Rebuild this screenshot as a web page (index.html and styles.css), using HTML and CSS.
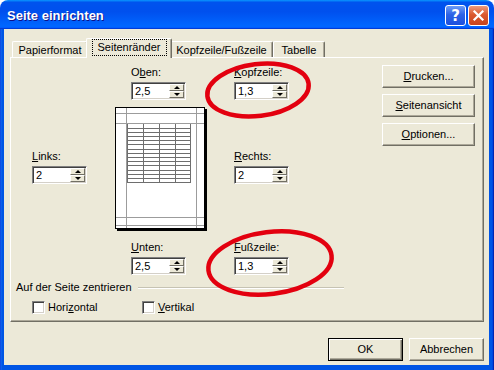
FILE: index.html
```html
<!DOCTYPE html>
<html lang="de">
<head>
<meta charset="utf-8">
<title>Seite einrichten</title>
<link rel="stylesheet" href="styles.css">
</head>
<body>
<div class="window">
  <div class="titlebar">
    <span class="title">Seite einrichten</span>
    <div class="tb-buttons">
      <span class="tb-btn help">?</span>
      <span class="tb-btn close"><svg width="13" height="13" viewBox="0 0 13 13"><path d="M2.5 2.5 L10.5 10.5 M10.5 2.5 L2.5 10.5" stroke="#fff" stroke-width="2.2" stroke-linecap="square"/></svg></span>
    </div>
  </div>
  <div class="frame">
    <div class="client">
      <div class="tabs">
        <div class="tab t1">Papierformat</div>
        <div class="tab t2 active"><span class="focus">Seitenränder</span></div>
        <div class="tab t3">Kopfzeile/Fußzeile</div>
        <div class="tab t4">Tabelle</div>
      </div>
      <div class="panel">
        <div class="main">
          <div class="diagram">
            <div class="field f-oben">
              <span class="lbl">O<u>b</u>en:</span>
              <div class="spin"><span class="val">2,5</span><span class="arrows"><span class="arr up"></span><span class="arr down"></span></span></div>
            </div>
            <div class="field f-kopf">
              <span class="lbl"><u>K</u>opfzeile:</span>
              <div class="spin"><span class="val">1,3</span><span class="arrows"><span class="arr up"></span><span class="arr down"></span></span></div>
            </div>
            <div class="field f-links">
              <span class="lbl"><u>L</u>inks:</span>
              <div class="spin"><span class="val">2</span><span class="arrows"><span class="arr up"></span><span class="arr down"></span></span></div>
            </div>
            <div class="preview">
              <svg width="93" height="125" viewBox="0 0 93 125" shape-rendering="crispEdges">
                <rect x="90" y="2" width="2" height="122" fill="#000"/>
                <rect x="2" y="122" width="90" height="2" fill="#000"/>
                <rect x="0.5" y="0.5" width="89" height="121" fill="#fff" stroke="#000"/>
                <g stroke="#9c9c9c" stroke-width="1">
                  <line x1="11.5" y1="1" x2="11.5" y2="121"/>
                  <line x1="81.5" y1="1" x2="81.5" y2="121"/>
                  <line x1="1" y1="6.5" x2="89" y2="6.5"/>
                  <line x1="1" y1="16.5" x2="89" y2="16.5"/>
                  <line x1="1" y1="110.5" x2="89" y2="110.5"/>
                  <line x1="1" y1="118.5" x2="89" y2="118.5"/>
                </g>
                <g stroke="#6e6e6e" stroke-width="1">
                  <line x1="12.5" y1="17" x2="12.5" y2="76"/>
                  <line x1="28.5" y1="17" x2="28.5" y2="76"/>
                  <line x1="44.5" y1="17" x2="44.5" y2="76"/>
                  <line x1="60.5" y1="17" x2="60.5" y2="76"/>
                  <line x1="75.5" y1="17" x2="75.5" y2="76"/>
                  <line x1="12" y1="21.5" x2="76" y2="21.5"/>
                  <line x1="12" y1="25.5" x2="76" y2="25.5"/>
                  <line x1="12" y1="29.5" x2="76" y2="29.5"/>
                  <line x1="12" y1="33.5" x2="76" y2="33.5"/>
                  <line x1="12" y1="37.5" x2="76" y2="37.5"/>
                  <line x1="12" y1="42.5" x2="76" y2="42.5"/>
                  <line x1="12" y1="46.5" x2="76" y2="46.5"/>
                  <line x1="12" y1="50.5" x2="76" y2="50.5"/>
                  <line x1="12" y1="54.5" x2="76" y2="54.5"/>
                  <line x1="12" y1="58.5" x2="76" y2="58.5"/>
                  <line x1="12" y1="63.5" x2="76" y2="63.5"/>
                  <line x1="12" y1="67.5" x2="76" y2="67.5"/>
                  <line x1="12" y1="71.5" x2="76" y2="71.5"/>
                  <line x1="12" y1="75.5" x2="76" y2="75.5"/>
                </g>
              </svg>
            </div>
            <div class="field f-rechts">
              <span class="lbl"><u>R</u>echts:</span>
              <div class="spin"><span class="val">2</span><span class="arrows"><span class="arr up"></span><span class="arr down"></span></span></div>
            </div>
            <div class="field f-unten">
              <span class="lbl"><u>U</u>nten:</span>
              <div class="spin"><span class="val">2,5</span><span class="arrows"><span class="arr up"></span><span class="arr down"></span></span></div>
            </div>
            <div class="field f-fuss">
              <span class="lbl"><u>F</u>ußzeile:</span>
              <div class="spin"><span class="val">1,3</span><span class="arrows"><span class="arr up"></span><span class="arr down"></span></span></div>
            </div>
          </div>
          <div class="center">
            <div class="sec-title"><span>Auf der Seite zentrieren</span><span class="rule"></span></div>
            <div class="checks">
              <label class="check c-h"><span class="box"></span><span>Hori<u>z</u>ontal</span></label>
              <label class="check"><span class="box"></span><span><u>V</u>ertikal</span></label>
            </div>
          </div>
        </div>
        <div class="side">
          <div class="btn"><u>D</u>rucken...</div>
          <div class="btn"><u>S</u>eitenansicht</div>
          <div class="btn"><u>O</u>ptionen...</div>
        </div>
      </div>
      <div class="footer">
        <div class="btn default">OK</div>
        <div class="btn">Abbrechen</div>
      </div>
    </div>
  </div>
  <svg class="annot" width="494" height="370" viewBox="0 0 494 370">
    <ellipse cx="258" cy="90" rx="51" ry="26" transform="rotate(-7 258 90)" fill="none" stroke="#e3000f" stroke-width="4.5"/>
    <ellipse cx="270" cy="263" rx="62" ry="31" transform="rotate(-7 270 263)" fill="none" stroke="#e3000f" stroke-width="4.5"/>
  </svg>
</div>
</body>
</html>
```

FILE: styles.css
```css
* { box-sizing: border-box; }
html, body { margin: 0; padding: 0; }
body {
  width: 494px;
  height: 370px;
  overflow: hidden;
  background: #fff;
  font-family: "Liberation Sans", Arial, sans-serif;
  font-size: 11px;
  color: #000;
}
u { text-decoration: underline; text-underline-offset: 1px; }

.window {
  position: relative;
  width: 494px;
  height: 370px;
  display: flex;
  flex-direction: column;
}

.titlebar {
  height: 29px;
  flex: none;
  border-radius: 8px 8px 0 0;
  background: linear-gradient(180deg, #0997ff, #0053ee 8%, #0050ee 40%, #06f 88%, #06f 93%, #005bff 95%, #003dd7 96%, #003dd7);
  display: flex;
  align-items: center;
  justify-content: space-between;
  padding: 2px 5px 0 7px;
}
.title {
  color: #fff;
  font-weight: bold;
  font-size: 13px;
  text-shadow: 1px 1px #0f1089;
  letter-spacing: 0;
}
.tb-buttons { display: flex; gap: 2px; }
.tb-btn {
  width: 21px;
  height: 21px;
  border: 1px solid #fff;
  border-radius: 3px;
  display: flex;
  align-items: center;
  justify-content: center;
}
.help {
  background: linear-gradient(180deg, #6c9cf7, #2d63e6 45%, #1c50de);
  color: #fff;
  font-weight: bold;
  font-size: 15px;
  font-family: "DejaVu Sans", sans-serif;
}
.close {
  background: linear-gradient(180deg, #ec9a7d, #db5a30 45%, #c8431d);
}

.frame {
  flex: 1;
  padding: 0 5px 5px 4px;
  background: linear-gradient(90deg, #0831d9 0, #166aee 1px, #0055e5 2px, #0055e5 calc(100% - 2px), #003bda calc(100% - 1px), #00138c 100%);
  display: flex;
}
.client {
  flex: 1;
  background: #ece9d8;
  padding: 9px 5px 0 6px;
  display: flex;
  flex-direction: column;
}

/* tabs */
.tabs {
  height: 19px;
  display: flex;
  align-items: flex-end;
  padding-left: 2px;
  position: relative;
  z-index: 1;
}
.tab {
  height: 16px;
  padding-top: 2px;
  line-height: 13px;
  text-align: center;
  background: #ece9d8;
  border-top: 1px solid #fff;
  border-left: 1px solid #fff;
  border-right: 1px solid #716f64;
  box-shadow: inset -1px 0 #aca899;
  border-radius: 2px 2px 0 0;
  white-space: nowrap;
}
.t1 { width: 76px; }
.t2 { width: 86px; }
.t3 { width: 103px; }
.t4 { width: 52px; }
.tab.active {
  height: 20px;
  margin: 0 -2px -1px -2px;
  padding-top: 0;
  position: relative;
  z-index: 2;
}
.focus {
  display: inline-block;
  border: 1px dotted #000;
  line-height: 15px;
  padding: 0 5px;
}

/* panel */
.panel {
  height: 265px;
  flex: none;
  border: 1px solid;
  border-color: #fff #716f64 #716f64 #fff;
  box-shadow: inset -1px -1px #aca899;
  display: flex;
}
.main { width: 333px; }
.side {
  margin-left: auto;
  margin-right: 8px;
  padding-top: 7px;
  display: flex;
  flex-direction: column;
  gap: 6px;
}

.diagram {
  display: grid;
  grid-template-columns: 83px 92px 27px 56px;
  padding: 8px 0 0 21px;
}
.field {
  display: flex;
  flex-direction: column;
  gap: 3px;
  align-items: flex-start;
}
.lbl { line-height: 13px; }
.f-oben { grid-column: 2; grid-row: 1; margin-left: 16px; }
.f-kopf { grid-column: 4; grid-row: 1; }
.f-links { grid-column: 1; grid-row: 2; align-self: start; margin-top: 50px; }
.preview { grid-column: 2; grid-row: 2; margin: 7px 0 9px 0; height: 125px; }
.preview svg { display: block; }
.f-rechts { grid-column: 4; grid-row: 2; align-self: start; margin-top: 50px; }
.f-unten { grid-column: 2; grid-row: 3; margin-left: 16px; }
.f-fuss { grid-column: 4; grid-row: 3; }

.spin {
  width: 55px;
  height: 18px;
  background: #fff;
  border: 1px solid;
  border-color: #808080 #fff #fff #808080;
  box-shadow: inset 1px 1px #404040, inset -1px -1px #d4d0c8;
  display: flex;
  padding: 1px;
}
.val {
  flex: 1;
  padding: 1px 0 0 2px;
  line-height: 13px;
}
.arrows {
  width: 15px;
  display: flex;
  flex-direction: column;
}
.arr {
  flex: 1;
  background: #ece9d8;
  border: 1px solid;
  border-color: #fff #716f64 #716f64 #fff;
  display: flex;
  align-items: center;
  justify-content: center;
}
.arr::before {
  content: "";
  width: 0;
  height: 0;
  border-left: 3px solid transparent;
  border-right: 3px solid transparent;
}
.up::before { border-bottom: 3px solid #000; }
.down::before { border-top: 3px solid #000; }

.center { padding: 6px 0 0 5px; }
.sec-title {
  display: flex;
  align-items: center;
  gap: 6px;
  line-height: 13px;
}
.rule {
  flex: 1;
  height: 2px;
  border-top: 1px solid #c6c3b3;
  border-bottom: 1px solid #fff;
}
.checks {
  display: flex;
  padding: 7px 0 0 16px;
}
.check {
  display: flex;
  align-items: center;
  gap: 3px;
  line-height: 13px;
}
.c-h { width: 110px; }
.box {
  width: 13px;
  height: 13px;
  background: #fff;
  border: 1px solid;
  border-color: #808080 #fff #fff #808080;
  box-shadow: inset 1px 1px #404040, inset -1px -1px #d4d0c8;
}

/* buttons */
.btn {
  width: 93px;
  height: 23px;
  display: flex;
  align-items: center;
  justify-content: center;
  background: #ece9d8;
  border: 1px solid;
  border-color: #fff #716f64 #716f64 #fff;
  box-shadow: inset -1px -1px #aca899;
  line-height: 13px;
}
.footer {
  display: flex;
  justify-content: flex-end;
  gap: 6px;
  padding-top: 16px;
}
.footer .btn { width: 75px; height: 23px; }
.btn.default {
  border-color: #000;
  box-shadow: inset 1px 1px #fff, inset -1px -1px #716f64, inset -2px -2px #aca899;
}

.annot {
  position: absolute;
  left: 0;
  top: 0;
  pointer-events: none;
}
```
